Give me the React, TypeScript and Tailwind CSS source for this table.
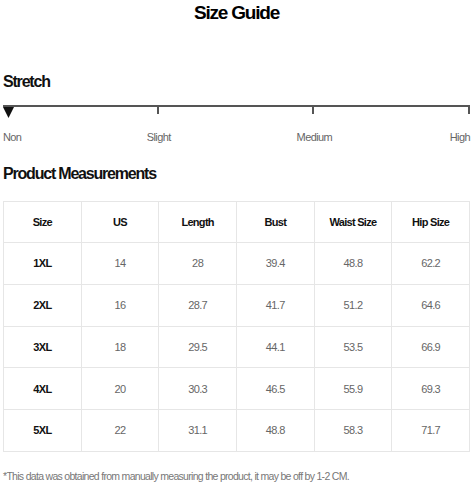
import React from 'react';

const font = { fontFamily: '"Liberation Sans", Arial, sans-serif' };

const rows = [
  ['1XL', '14', '28', '39.4', '48.8', '62.2'],
  ['2XL', '16', '28.7', '41.7', '51.2', '64.6'],
  ['3XL', '18', '29.5', '44.1', '53.5', '66.9'],
  ['4XL', '20', '30.3', '46.5', '55.9', '69.3'],
  ['5XL', '22', '31.1', '48.8', '58.3', '71.7'],
];

const headers = ['Size', 'US', 'Length', 'Bust', 'Waist Size', 'Hip Size'];

export default function App() {
  return (
    <div className="w-[473px] h-[484px] bg-white overflow-hidden px-[3px]" style={font}>
      {/* title */}
      <h1 className="text-center font-bold text-[19px] leading-[26px] tracking-[-1.2px] text-black">Size Guide</h1>

      {/* stretch scale */}
      <h2 className="mt-[45px] font-bold text-[16px] leading-[22px] tracking-[-1.2px] text-[#111]">Stretch</h2>
      <div className="mt-[12px] border-t-2 border-[#555] grid grid-cols-3">
        <div className="h-[7px] border-r-2 border-[#555] relative">
          <svg className="absolute left-0 top-0" width="11" height="11" viewBox="0 0 11 11">
            <polygon points="0,0 11,0 5.5,11" fill="#111" />
          </svg>
        </div>
        <div className="h-[7px] border-r-2 border-[#555]" />
        <div className="h-[7px] border-r-2 border-[#555]" />
      </div>
      <div className="mt-[16px] grid grid-cols-6 text-[11px] leading-[14px] tracking-[-0.6px] text-[#666]">
        <span className="text-left">Non</span>
        <span className="col-span-2 text-center">Slight</span>
        <span className="col-span-2 text-center">Medium</span>
        <span className="text-right">High</span>
      </div>

      {/* measurements */}
      <h2 className="mt-[19px] font-bold text-[16px] leading-[22px] tracking-[-1.2px] text-[#111]">Product Measurements</h2>
      <table className="mt-[16px] w-[467px] border-collapse table-fixed">
        <thead>
          <tr className="h-[41px]">
            {headers.map((h) => (
              <th key={h} className="border border-[#e6e6e6] font-bold text-[11px] tracking-[-0.7px] text-[#111] text-center">{h}</th>
            ))}
          </tr>
        </thead>
        <tbody>
          {rows.map((r) => (
            <tr key={r[0]} className="h-[41.8px]">
              {r.map((c, i) => (
                <td
                  key={i}
                  className={`border border-[#e6e6e6] text-center text-[11px] tracking-[-0.6px] ${i === 0 ? 'font-bold text-[#111]' : 'text-[#666]'}`}
                >
                  {c}
                </td>
              ))}
            </tr>
          ))}
        </tbody>
      </table>

      <p className="mt-[18px] text-[10.5px] leading-[13px] tracking-[-0.7px] text-[#777]">
        *This data was obtained from manually measuring the product, it may be off by 1-2 CM.
      </p>
    </div>
  );
}
